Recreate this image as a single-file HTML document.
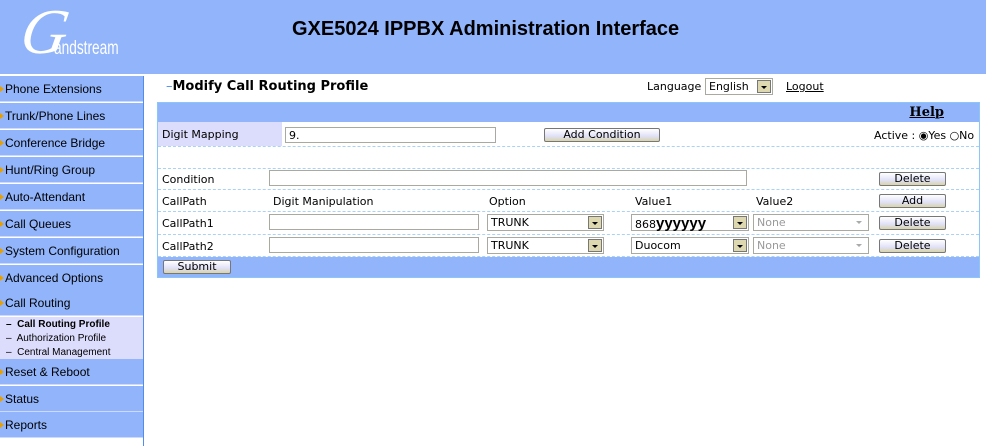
<!DOCTYPE html>
<html><head><style>
*{margin:0;padding:0;box-sizing:border-box}
body{width:986px;height:446px;background:#fff;font-family:"DejaVu Sans",Verdana,sans-serif;font-size:11px;position:relative;overflow:hidden;color:#000}
.a{position:absolute}
#hdr{left:0;top:0;width:986px;height:74px;background:#91b4fb}
#title{left:292px;top:18px;font:bold 20px "Liberation Sans",Arial,sans-serif}
#side{left:0;top:76px;width:144px;height:370px;border-right:1px solid #4f8ef0}
.it{position:absolute;left:0;width:143px;height:26px;background:#91b4fb;font:12px "Liberation Sans",Arial,sans-serif;padding:6px 0 0 5px;border-bottom:1px solid #cdd9ff}
.it:before{content:"";position:absolute;left:0;top:10px;border-left:4px solid #e8a000;border-top:3px solid transparent;border-bottom:3px solid transparent}
.sub{position:absolute;left:0;top:241px;width:143px;height:42px;background:#dcdcfc;font:10px "Liberation Sans",Arial,sans-serif;padding:1px 0 0 6px;line-height:14px}
#panel{left:157px;top:102px;width:823px;height:176px;border:1px solid #8cc6f8;background:#fff}
.bar{position:absolute;left:0;width:821px;background:#91b4fb}
.row{position:absolute;left:0;width:821px;border-bottom:1px dashed #a9d2f6}
.t{position:absolute;font-size:11px}
.in{position:absolute;height:16px;border:1px solid #a9a9a0;background:#fff;font-size:11px;padding:1px 3px}
.btn{position:absolute;height:14px;border:1px solid #777;border-radius:2px;background:linear-gradient(#fff,#e0e0f8 60%,#d8d4a8);font-size:11px;text-align:center;line-height:12px}
.sel{position:absolute;height:17px;border:1px solid #a9a9a0;background:#fff;font-size:11px;padding:1px 3px}
.sel i{position:absolute;right:1px;top:1px;width:14px;height:13px;border:1px solid #777;background:#ddd8b0}
.sel i:after{content:"";position:absolute;left:3px;top:5px;border-top:3px solid #000;border-left:3px solid transparent;border-right:3px solid transparent}
.dis{color:#999}
.dis i{background:#fff;border:none}
.dis i:after{border-top-color:#aaa}
</style></head><body>
<div id="hdr" class="a">
<div class="a" style="left:22px;top:0px;font:italic 64px 'Liberation Serif',serif;color:#fff;line-height:64px;transform:skewX(-10deg)">G</div>
<div class="a" style="left:54px;top:38px;font:19px 'Liberation Sans',sans-serif;color:#fff;transform:scaleX(.72);transform-origin:left">andstream</div>
<div id="title" class="a">GXE5024 IPPBX Administration Interface</div>
</div>
<div id="side" class="a">
<div class="it" style="top:0">Phone Extensions</div>
<div class="it" style="top:27px">Trunk/Phone Lines</div>
<div class="it" style="top:54px">Conference Bridge</div>
<div class="it" style="top:81px">Hunt/Ring Group</div>
<div class="it" style="top:108px">Auto-Attendant</div>
<div class="it" style="top:135px">Call Queues</div>
<div class="it" style="top:162px">System Configuration</div>
<div class="it" style="top:189px">Advanced Options</div>
<div class="it" style="top:214px">Call Routing</div>
<div class="sub"><b>–&nbsp; Call Routing Profile</b><br>–&nbsp; Authorization Profile<br>–&nbsp; Central Management</div>
<div class="it" style="top:283px">Reset &amp; Reboot</div>
<div class="it" style="top:310px">Status</div>
<div class="it" style="top:336px">Reports</div>
</div>
<div class="a" style="left:166px;top:79px;font:bold 13px 'DejaVu Sans',Verdana,sans-serif"><span style="color:#4f8ef0;font-weight:normal">–</span>Modify Call Routing Profile</div>
<div class="a" style="left:647px;top:80px">Language</div>
<div class="sel" style="left:705px;top:78px;width:68px;height:17px">English<i></i></div>
<div class="a" style="left:786px;top:80px;text-decoration:underline">Logout</div>
<div id="panel" class="a">
<div class="bar" style="top:0;height:19px"><span class="a" style="right:35px;top:2px;font:bold 13px 'DejaVu Serif',serif;text-decoration:underline">Help</span></div>
<div class="row" style="top:19px;height:25px"><div class="a" style="left:0;top:0;width:124px;height:24px;background:#dcdcfc"></div><span class="t" style="left:4px;top:6px">Digit Mapping</span></div>
<div class="in" style="left:127px;top:24px;width:211px">9.</div>
<div class="btn" style="left:386px;top:25px;width:116px">Add Condition</div>
<span class="t" style="left:716px;top:26px">Active : ◉Yes ○No</span>
<div class="row" style="top:44px;height:22px"></div>
<div class="row" style="top:66px;height:21px"><span class="t" style="left:4px;top:4px">Condition</span></div>
<div class="in" style="left:111px;top:67px;width:478px"></div>
<div class="btn" style="left:721px;top:69px;width:67px">Delete</div>
<div class="row" style="top:87px;height:22px"><span class="t" style="left:4px;top:5px">CallPath</span><span class="t" style="left:115px;top:5px">Digit Manipulation</span><span class="t" style="left:331px;top:5px">Option</span><span class="t" style="left:477px;top:5px">Value1</span><span class="t" style="left:598px;top:5px">Value2</span></div>
<div class="btn" style="left:721px;top:91px;width:67px">Add</div>
<div class="row" style="top:109px;height:23px"><span class="t" style="left:4px;top:5px">CallPath1</span></div>
<div class="in" style="left:111px;top:111px;width:210px"></div>
<div class="sel" style="left:329px;top:111px;width:117px">TRUNK<i></i></div>
<div class="sel" style="left:473px;top:111px;width:118px;padding-top:0">868<span style="font:bold 15px 'Liberation Sans',sans-serif">yyyyyy</span><i></i></div>
<div class="sel dis" style="left:595px;top:111px;width:116px">None<i></i></div>
<div class="btn" style="left:721px;top:113px;width:67px">Delete</div>
<div class="row" style="top:132px;height:22px"><span class="t" style="left:4px;top:5px">CallPath2</span></div>
<div class="in" style="left:111px;top:134px;width:210px"></div>
<div class="sel" style="left:329px;top:134px;width:117px">TRUNK<i></i></div>
<div class="sel" style="left:473px;top:134px;width:118px">Duocom<i></i></div>
<div class="sel dis" style="left:595px;top:134px;width:116px">None<i></i></div>
<div class="btn" style="left:721px;top:136px;width:67px">Delete</div>
<div class="bar" style="top:154px;height:20px"></div>
<div class="btn" style="left:5px;top:157px;width:68px">Submit</div>
</div>
</body></html>
